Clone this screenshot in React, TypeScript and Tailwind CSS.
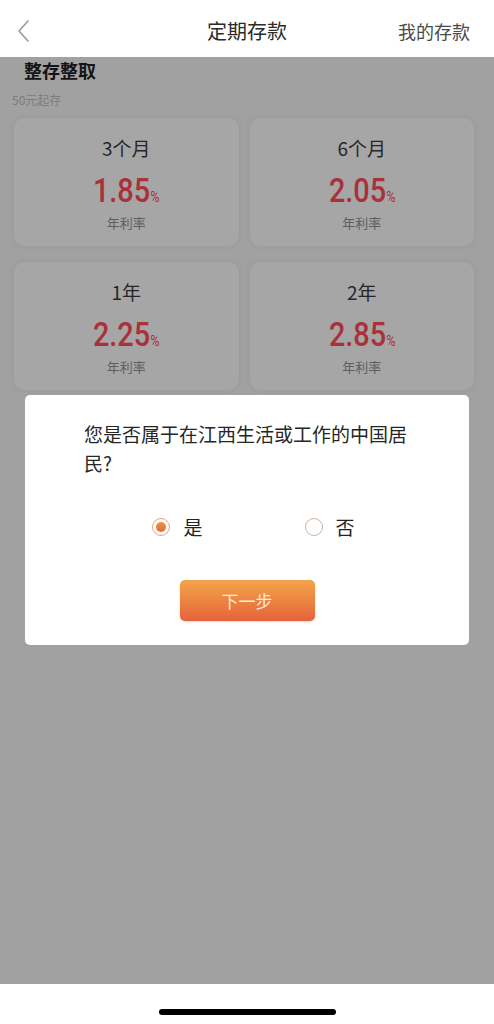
import React from "react";

const rates = [
    { term: "3个月", rate: "1.85" },
    { term: "6个月", rate: "2.05" },
    { term: "1年", rate: "2.25" },
    { term: "2年", rate: "2.85" },
];

function RateCard({ term, rate }: { term: string; rate: string }) {
    return (
        <div className="h-[128px] rounded-[10px] bg-[#a6a6a6] shadow-[0_0_6px_rgba(0,0,0,0.06)] flex flex-col items-center pt-[16px]">
            <div className="text-[19px] leading-[28px] text-[#262626]">{term}</div>
            <div className="mt-[10px] flex items-baseline text-[#a93139] leading-[36px] scale-x-[0.85]">
                <span className="text-[34px] font-medium font-['Roboto',sans-serif]">{rate}</span>
                <span className="text-[15px] font-['Roboto',sans-serif]">%</span>
            </div>
            <div className="-mt-[2px] text-[13px] leading-[20px] text-[#5e5e5e]">年利率</div>
        </div>
    );
}

function Radio({ checked, label }: { checked: boolean; label: string }) {
    return (
        <div className="flex items-center gap-[13px]">
            <span
                className={
                    checked
                        ? "w-[18px] h-[18px] rounded-full border-[1.5px] border-[#e9a277] flex items-center justify-center"
                        : "w-[18px] h-[18px] rounded-full border-[1.5px] border-[#cdb3a3]"
                }
            >
                {checked && <span className="w-[10px] h-[10px] rounded-full bg-gradient-to-b from-[#ee9447] to-[#e5683a]"></span>}
            </span>
            <span className="text-[19px] leading-[24px] text-[#222]">{label}</span>
        </div>
    );
}

export default function App() {
    return (
        <div className="w-full h-[1024px] flex flex-col bg-white font-['Noto_Sans_CJK_SC',sans-serif]">
            {/* Header */}
            <div className="h-[57px] shrink-0 flex items-center justify-between pt-[5px] pl-[16px] pr-[24px]">
                <svg width="16" height="24" viewBox="0 0 16 24" fill="none">
                    <path d="M12 2 L3 12 L12 22" stroke="#9a9a9a" strokeWidth="1.6" strokeLinecap="round" strokeLinejoin="round" />
                </svg>
                <div className="text-[20px] text-[#2b2b2b] ml-[64px]">定期存款</div>
                <div className="text-[18px] text-[#4a4a4a]">我的存款</div>
            </div>

            {/* Content under the mask */}
            <div className="relative flex-1 bg-[#a1a1a1]">
                <div className="pl-[24px] text-[18px] font-bold leading-[26px] text-[#141414]">整存整取</div>
                <div className="pl-[12px] mt-[8px] text-[12px] leading-[18px] text-[#7c7c7c]">50元起存</div>
                <div className="grid grid-cols-2 gap-x-[11px] gap-y-[16px] pl-[14px] pr-[20px] mt-[9px]">
                    {rates.map((r) => (
                        <RateCard key={r.term} term={r.term} rate={r.rate} />
                    ))}
                </div>

                {/* Dialog */}
                <div className="absolute left-[25px] top-[338px] w-[444px] rounded-[5px] bg-white pt-[24px] pb-[24px]">
                    <p className="pl-[59px] pr-[55px] text-[19px] leading-[29px] text-[#262626]">
                        您是否属于在江西生活或工作的中国居民?
                    </p>
                    <div className="mt-[38px] flex justify-center gap-[102px] pl-[13px]">
                        <Radio checked label="是" />
                        <Radio checked={false} label="否" />
                    </div>
                    <div className="mt-[41px] flex justify-center">
                        <button className="w-[135px] h-[41px] rounded-[5px] bg-gradient-to-b from-[#f2a449] to-[#e6623a] text-[17px] text-[#fdeadb] shadow-[0_1px_2px_rgba(0,0,0,0.15)]">
                            下一步
                        </button>
                    </div>
                </div>
            </div>

            {/* Home indicator */}
            <div className="h-[40px] shrink-0 bg-white flex justify-center pt-[25px]">
                <div className="w-[177px] h-[6px] rounded-full bg-black"></div>
            </div>
        </div>
    );
}
